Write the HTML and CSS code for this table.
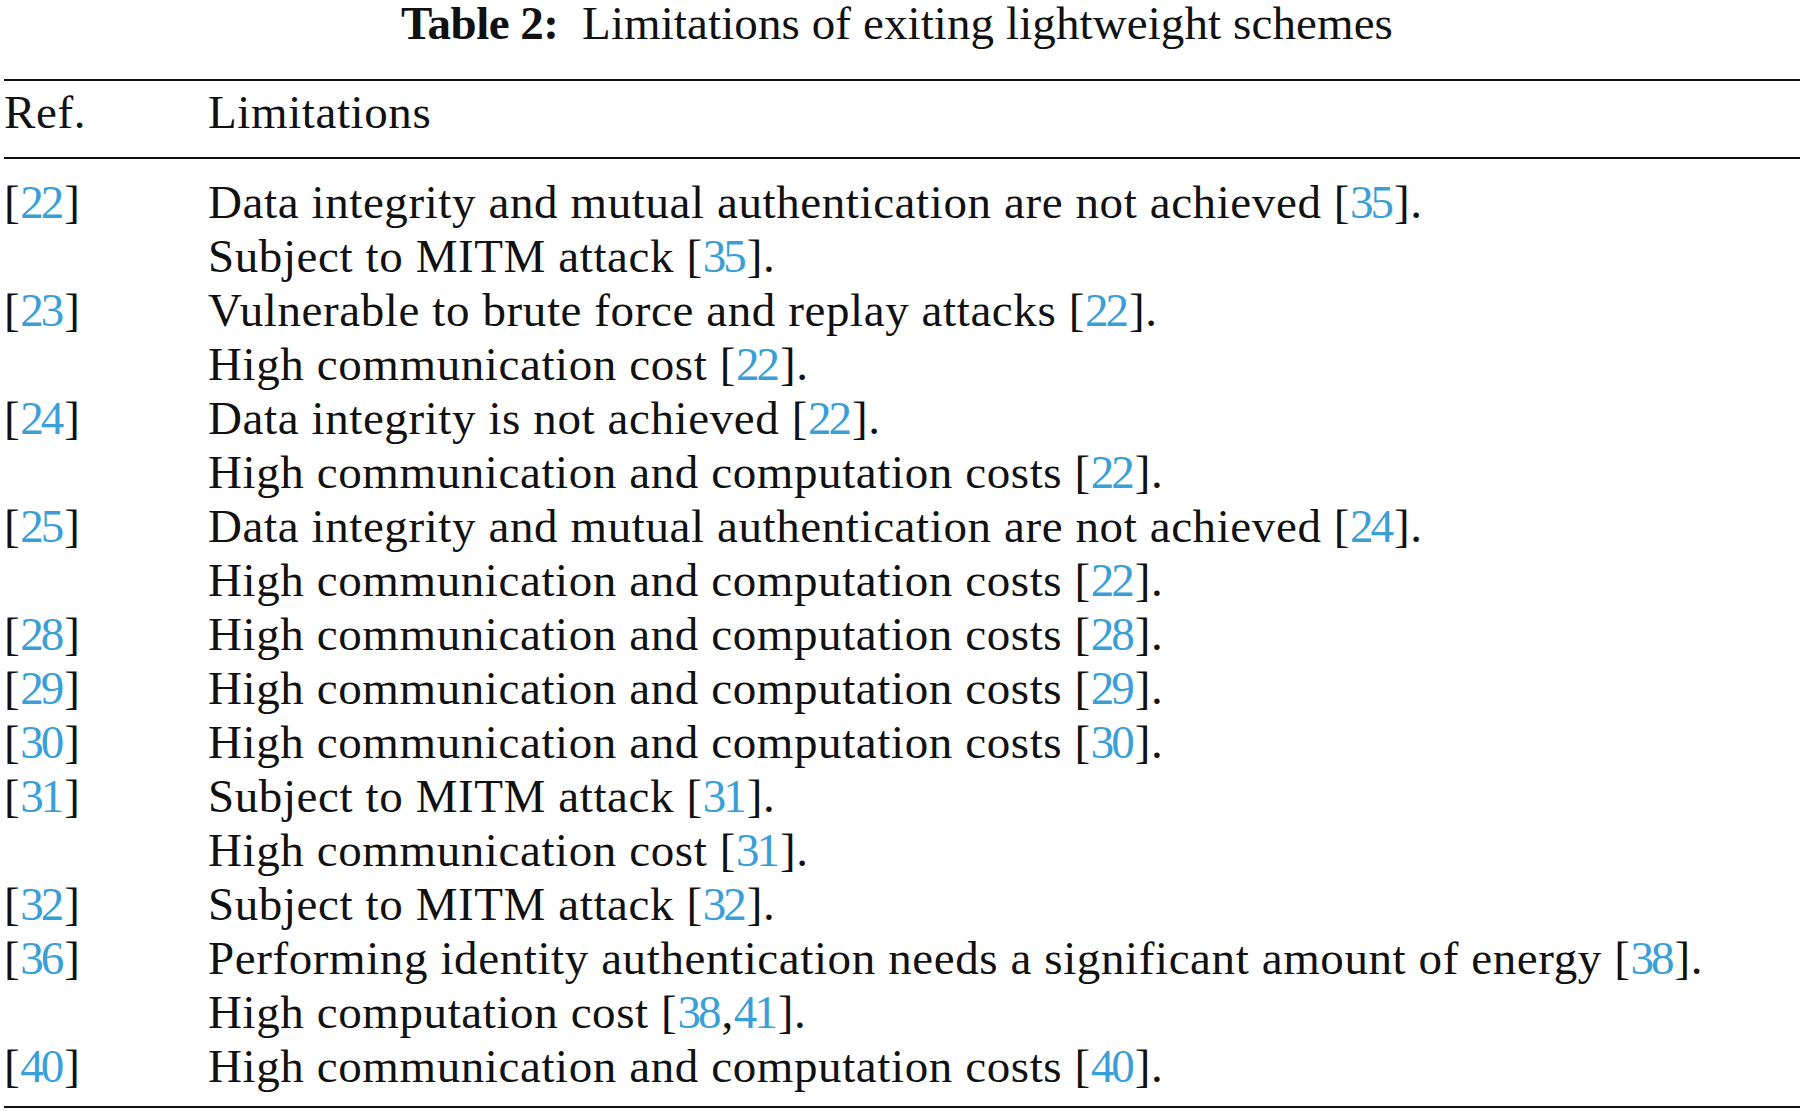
FILE: index.html
```html
<!DOCTYPE html>
<html lang="en">
<head>
<meta charset="utf-8">
<title>Table 2</title>
<link rel="stylesheet" href="styles.css">
</head>
<body>
<div class="page">
  <div class="caption"><span class="label">Table 2:</span>&ensp;Limitations of exiting lightweight schemes</div>
  <table class="tbl">
    <thead>
      <tr><th class="ref">Ref.</th><th>Limitations</th></tr>
    </thead>
    <tbody>
      <tr><td class="ref">[<a>22</a>]</td><td><div>Data integrity and mutual authentication are not achieved [<a>35</a>].</div><div>Subject to MITM attack [<a>35</a>].</div></td></tr>
      <tr><td class="ref">[<a>23</a>]</td><td><div>Vulnerable to brute force and replay attacks [<a>22</a>].</div><div>High communication cost [<a>22</a>].</div></td></tr>
      <tr><td class="ref">[<a>24</a>]</td><td><div>Data integrity is not achieved [<a>22</a>].</div><div>High communication and computation costs [<a>22</a>].</div></td></tr>
      <tr><td class="ref">[<a>25</a>]</td><td><div>Data integrity and mutual authentication are not achieved [<a>24</a>].</div><div>High communication and computation costs [<a>22</a>].</div></td></tr>
      <tr><td class="ref">[<a>28</a>]</td><td><div>High communication and computation costs [<a>28</a>].</div></td></tr>
      <tr><td class="ref">[<a>29</a>]</td><td><div>High communication and computation costs [<a>29</a>].</div></td></tr>
      <tr><td class="ref">[<a>30</a>]</td><td><div>High communication and computation costs [<a>30</a>].</div></td></tr>
      <tr><td class="ref">[<a>31</a>]</td><td><div>Subject to MITM attack [<a>31</a>].</div><div>High communication cost [<a>31</a>].</div></td></tr>
      <tr><td class="ref">[<a>32</a>]</td><td><div>Subject to MITM attack [<a>32</a>].</div></td></tr>
      <tr><td class="ref">[<a>36</a>]</td><td><div>Performing identity authentication needs a significant amount of energy [<a>38</a>].</div><div>High computation cost [<a>38</a>,<a>41</a>].</div></td></tr>
      <tr><td class="ref">[<a>40</a>]</td><td><div>High communication and computation costs [<a>40</a>].</div></td></tr>
    </tbody>
  </table>
</div>
</body>
</html>
```

FILE: styles.css
```css
html, body {
  margin: 0;
  padding: 0;
  background: #ffffff;
}

.page {
  padding: 0 4px 0 4px;
  font-family: "Liberation Serif", "Times New Roman", serif;
  color: #111111;
}

.caption {
  text-align: center;
  font-size: 47px;
  line-height: 46px;
  letter-spacing: 0.1px;
  margin: 0 0 33px 0;
  padding-right: 10px;
}

.caption .label {
  font-weight: bold;
  letter-spacing: -0.5px;
}

.tbl {
  width: 100%;
  border-collapse: collapse;
  font-size: 47px;
  line-height: 54px;
  letter-spacing: 0.6px;
}

.tbl th {
  font-weight: normal;
  text-align: left;
  padding: 4px 0 18px 0;
}

.tbl thead tr {
  border-top: 2px solid #111111;
  border-bottom: 2px solid #111111;
}

.tbl tbody tr:first-child td {
  padding-top: 16px;
}

.tbl tbody tr:last-child td {
  padding-bottom: 13px;
}

.tbl tbody {
  border-bottom: 2px solid #111111;
}

.tbl td {
  padding: 0;
  vertical-align: top;
  text-align: left;
}

.tbl .ref {
  width: 204px;
  padding-left: 0;
}

.tbl a {
  color: #3a9fd6;
  text-decoration: none;
  letter-spacing: -3px;
  margin-right: 3px;
}
```
